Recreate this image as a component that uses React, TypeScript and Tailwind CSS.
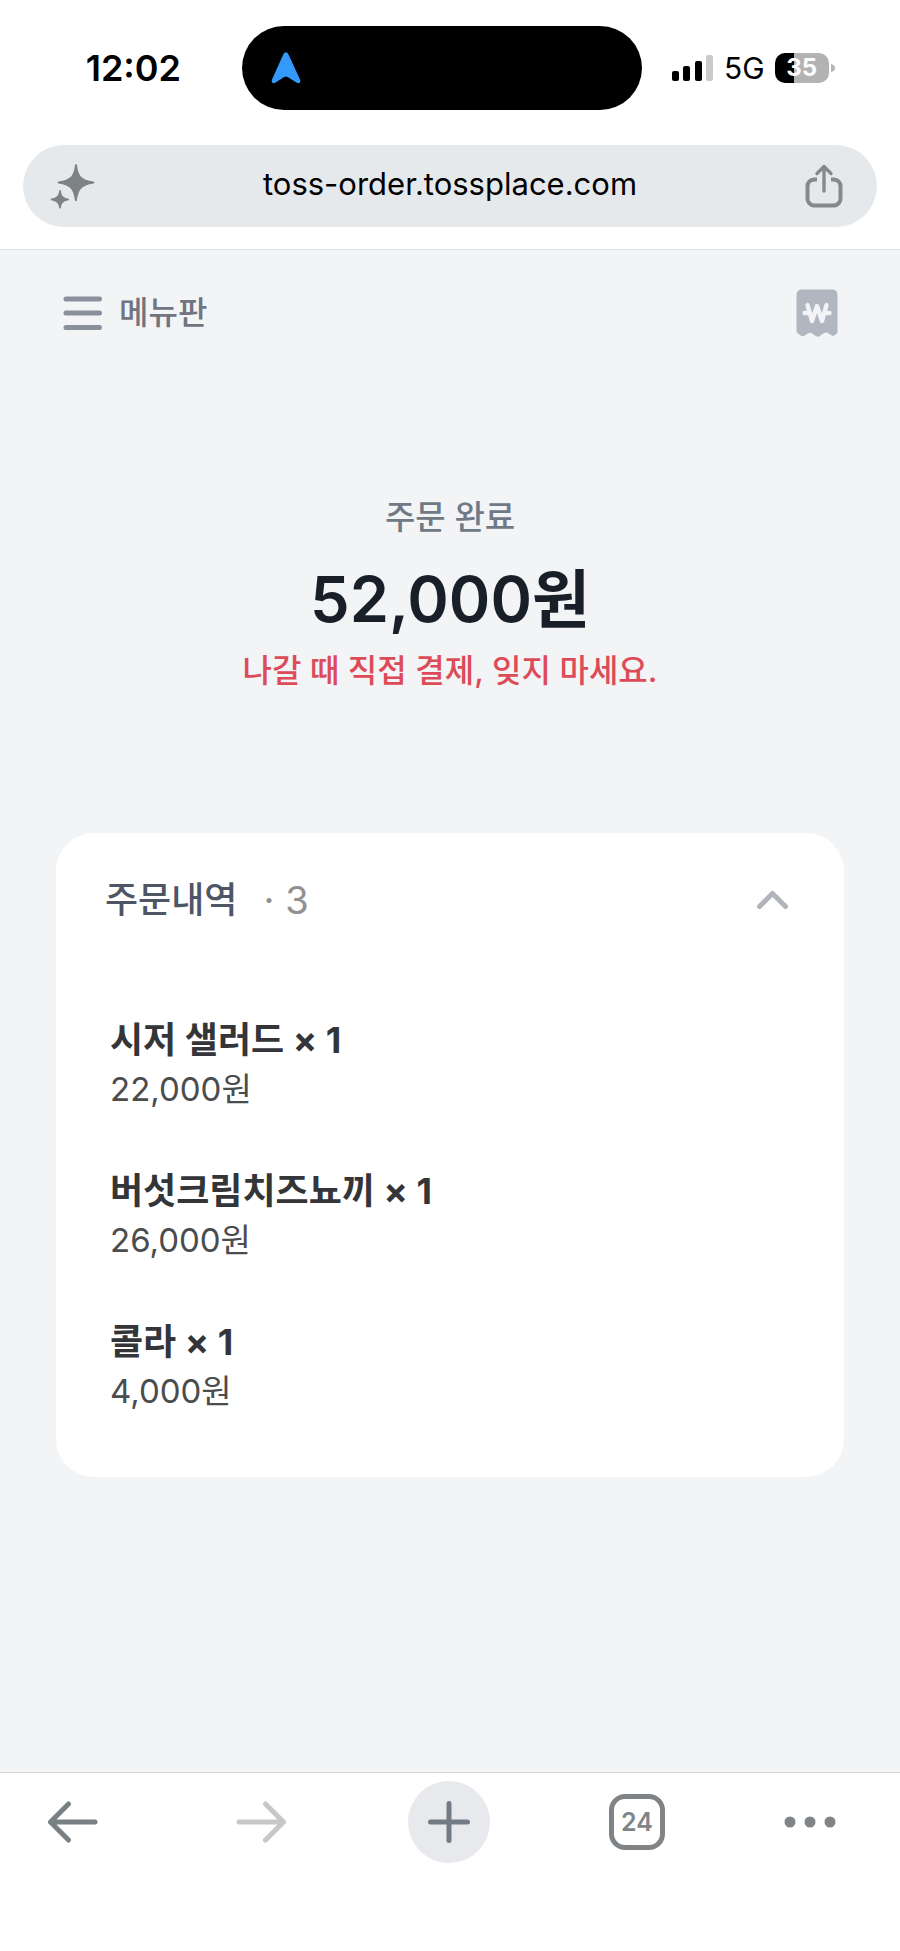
import { useState } from "react";

interface OrderItem {
  id: number;
  name: string;
  quantity: number;
  price: number;
}

const orderItems: OrderItem[] = [
  { id: 1, name: "시저 샐러드", quantity: 1, price: 22000 },
  { id: 2, name: "버섯크림치즈뇨끼", quantity: 1, price: 26000 },
  { id: 3, name: "콜라", quantity: 1, price: 4000 },
];

const formatWon = (value: number) => `${value.toLocaleString("en-US")}원`;

function StatusBar() {
  return (
    <div className="grid grid-cols-[1fr_400px_1fr] items-center pt-[26px] pr-4">
      <div className="pr-[61px] text-right text-[36px] leading-[40px] font-semibold">12:02</div>
      <div className="flex h-[84px] items-center rounded-full bg-black pl-7">
        <svg className="h-[34px] w-[32px]" viewBox="0 0 32 34" fill="#3399fb">
          <path d="M13.4 3.2C14.2.5 17.4.5 18.4 3.2L30 28.4C31.2 31.4 29 33.2 26.4 31.6L17.6 26C16.5 25.2 15.3 25.2 14.2 26L5.6 31.6C3 33.2.8 31.4 2 28.4Z" />
        </svg>
      </div>
      <div className="flex items-center pl-[30px]">
        <svg className="h-[26px] w-[42px]" viewBox="0 0 42 26">
          <rect x="0" y="16" width="7" height="10" rx="2" />
          <rect x="11" y="11" width="7" height="15" rx="2" />
          <rect x="23" y="6" width="7" height="20" rx="2" />
          <rect x="34" y="0" width="7" height="26" rx="2" fill="#cbcbcb" />
        </svg>
        <span className="ml-[10px] text-[30px] leading-[32px]">5G</span>
        <div className="ml-[10px] flex h-[30px] w-[54px] items-center justify-center overflow-hidden rounded-[10px] bg-linear-to-r from-black from-35% to-[#b3b3b3] to-35% text-[24px] leading-[30px] font-bold text-white">
          35
        </div>
        <svg className="ml-[2px] h-2 w-1" viewBox="0 0 4 8" fill="#b3b3b3">
          <path d="M0 0Q4 1 4 4T0 8Z" />
        </svg>
      </div>
    </div>
  );
}

function AddressBar() {
  return (
    <div className="mx-[23px] mt-[35px] mb-[22px] flex h-[82px] items-center justify-between rounded-full bg-[#e6e9ec] pr-[34px] pl-6">
      <button aria-label="AI">
        <svg className="h-[48px] w-[48px]" viewBox="0 0 48 48" fill="#7d8284">
          <path d="M28 3Q29 1 30 3C31.500 14 34 17.500 46.500 19.500Q48.500 20.500 46.500 21.500C34 23.500 31.500 28 30 38.500Q29 40 28 38.500C26.500 28 24 23.500 11.500 21.500Q9.500 20.500 11.500 19.500C24 17.500 26.500 14 28 3Z" />
          <path d="M12.200 28.500Q13 27.500 13.800 28.500C14.600 34 16 35.500 21.500 36.700Q23 37.500 21.500 38.300C16 39.500 14.600 41 13.800 46Q13 47 12.200 46C11.400 41 10 39.500 4 38.300Q3 37.500 4 36.700C10 35.500 11.400 34 12.200 28.500Z" />
        </svg>
      </button>
      <a href="https://toss-order.tossplace.com" className="pb-1 text-[31px] leading-[40px]">
        toss-order.tossplace.com
      </a>
      <button aria-label="공유">
        <svg className="h-[44px] w-[38px]" viewBox="0 0 38 44" fill="none" stroke="#85898b" strokeWidth="4" strokeLinecap="round" strokeLinejoin="round">
          <path d="M12 15.500H9A7 7 0 0 0 2.500 22V34A7 7 0 0 0 9 41.500H29A7 7 0 0 0 35.500 34V22A7 7 0 0 0 29 15.500H26" strokeLinecap="butt" />
          <path d="M19 27V3M12 9.500L19 2.500L26 9.500" strokeWidth="3.400" />
        </svg>
      </button>
    </div>
  );
}

function PageHeader() {
  return (
    <div className="flex items-center justify-between px-[62px] pt-[39px]">
      <button className="flex items-center gap-4 text-[32px] leading-[48px] font-medium text-[#70757f]">
        <svg className="h-[36px] w-[41px]" viewBox="0 0 41 36" stroke="#8b919c" strokeWidth="5" strokeLinecap="round">
          <path d="M4 4H37.500M4 18H37.500M4 32.500H37.500" />
        </svg>
        메뉴판
      </button>
      <button aria-label="영수증">
        <svg className="h-[48px] w-[42px]" viewBox="0 0 42 48">
          <path
            d="M6 .5H36Q41.500 .5 41.500 6V43Q41 45.500 36.500 47L31 43.500Q28.500 43 26.500 45L23 47.500Q21 48 19 46.500L15.500 44Q13.500 43 11 45L8 47Q6 48 4 46L1.500 44Q.5 43 .5 42V6Q.5 .5 6 .5Z"
            fill="#b1b7c0"
          />
          <path d="M11.500 16L16 32L21 17L26 32L30.500 16M8.500 24H12.500M29.500 24H33.500" fill="none" stroke="#f2f4f6" strokeWidth="4.400" strokeLinecap="round" strokeLinejoin="round" />
        </svg>
      </button>
    </div>
  );
}

function OrderCard() {
  const [isOpen, setIsOpen] = useState(true);

  return (
    <section className="mx-[56px] rounded-[38px] bg-white pb-[62px]">
      <button className="flex w-full items-center pt-[40px] pr-[53px] pl-[49px]" onClick={() => setIsOpen(!isOpen)}>
        <span className="text-[36px] leading-[54px] font-medium text-[#4e5666]">주문내역</span>
        <span className="ml-[26px] text-[38px] leading-[54px] text-[#8f9191]">· {orderItems.length}</span>
        <svg className="ml-auto h-[22px] w-[36px]" viewBox="0 0 36 22" fill="none" stroke="#b1b5bb" strokeWidth="5" strokeLinecap="round" strokeLinejoin="round">
          <path d="M4.500 17.500L17.500 4.500L30.500 17.500" />
        </svg>
      </button>
      {isOpen && (
        <ul className="mt-[88px] flex flex-col gap-[53px] pl-[54px]">
          {orderItems.map((item) => (
            <li key={item.id}>
              <p className="text-[36px] leading-[50px] font-bold text-[#333538]">
                {item.name} × {item.quantity}
              </p>
              <p className="text-[33px] leading-[48px] text-[#4b4c4e]">{formatWon(item.price)}</p>
            </li>
          ))}
        </ul>
      )}
    </section>
  );
}

function BottomBar() {
  return (
    <nav className="flex h-[179px] items-start justify-between border-t border-[#d6d9da] bg-white pt-[8px] pr-[64px] pl-[32px]">
      <button aria-label="뒤로" className="flex h-[82px] w-[82px] items-center justify-center">
        <svg className="h-[44px] w-[54px]" viewBox="0 0 54 44" fill="none" stroke="#788083" strokeWidth="5" strokeLinecap="round" strokeLinejoin="round">
          <path d="M49 22H4.500M22.500 4L4.500 22L22.500 40" />
        </svg>
      </button>
      <button aria-label="앞으로" className="flex h-[82px] w-[82px] items-center justify-center">
        <svg className="h-[44px] w-[54px]" viewBox="0 0 54 44" fill="none" stroke="#c6c7c8" strokeWidth="5" strokeLinecap="round" strokeLinejoin="round">
          <path d="M5 22H49.500M31.500 4L49.500 22L31.500 40" />
        </svg>
      </button>
      <button aria-label="새 탭" className="flex h-[82px] w-[82px] items-center justify-center rounded-full bg-[#e8e9ed]">
        <svg className="h-[44px] w-[44px]" viewBox="0 0 44 44" stroke="#737a84" strokeWidth="5" strokeLinecap="round">
          <path d="M22 3.500V40.500M3.500 22H40.500" />
        </svg>
      </button>
      <button aria-label="탭 24개" className="flex h-[82px] w-[82px] items-center justify-center">
        <span className="flex h-[56px] w-[56px] items-center justify-center rounded-[16px] border-5 border-[#808486] text-[25px] leading-[30px] font-semibold text-[#808486]">
          24
        </span>
      </button>
      <button aria-label="더보기" className="flex h-[82px] w-[52px] items-center justify-center">
        <svg className="h-3 w-[52px]" viewBox="0 0 52 12" fill="#808486">
          <circle cx="6" cy="6" r="5.500" />
          <circle cx="26" cy="6" r="5.500" />
          <circle cx="46" cy="6" r="5.500" />
        </svg>
      </button>
    </nav>
  );
}

export default function App() {
  return (
    <div className="flex min-h-screen flex-col bg-white font-['Inter','Noto_Sans_CJK_KR',sans-serif] text-black">
      <header className="border-b border-[#dcdee0]">
        <StatusBar />
        <AddressBar />
      </header>
      <main className="flex-1 bg-[#f2f4f6]">
        <PageHeader />
        {/* Order total */}
        <div className="mt-[156px] mb-[138px] flex flex-col items-center">
          <p className="text-[33px] leading-[48px] font-medium text-[#707a86]">주문 완료</p>
          <h1 className="mt-[16px] text-[63px] leading-[84px] font-semibold text-[#191f28]">{formatWon(52000)}</h1>
          <p className="mt-[6px] text-[32px] leading-[48px] font-medium text-[#dd4b59]">나갈 때 직접 결제, 잊지 마세요.</p>
        </div>
        <OrderCard />
      </main>
      <BottomBar />
    </div>
  );
}
